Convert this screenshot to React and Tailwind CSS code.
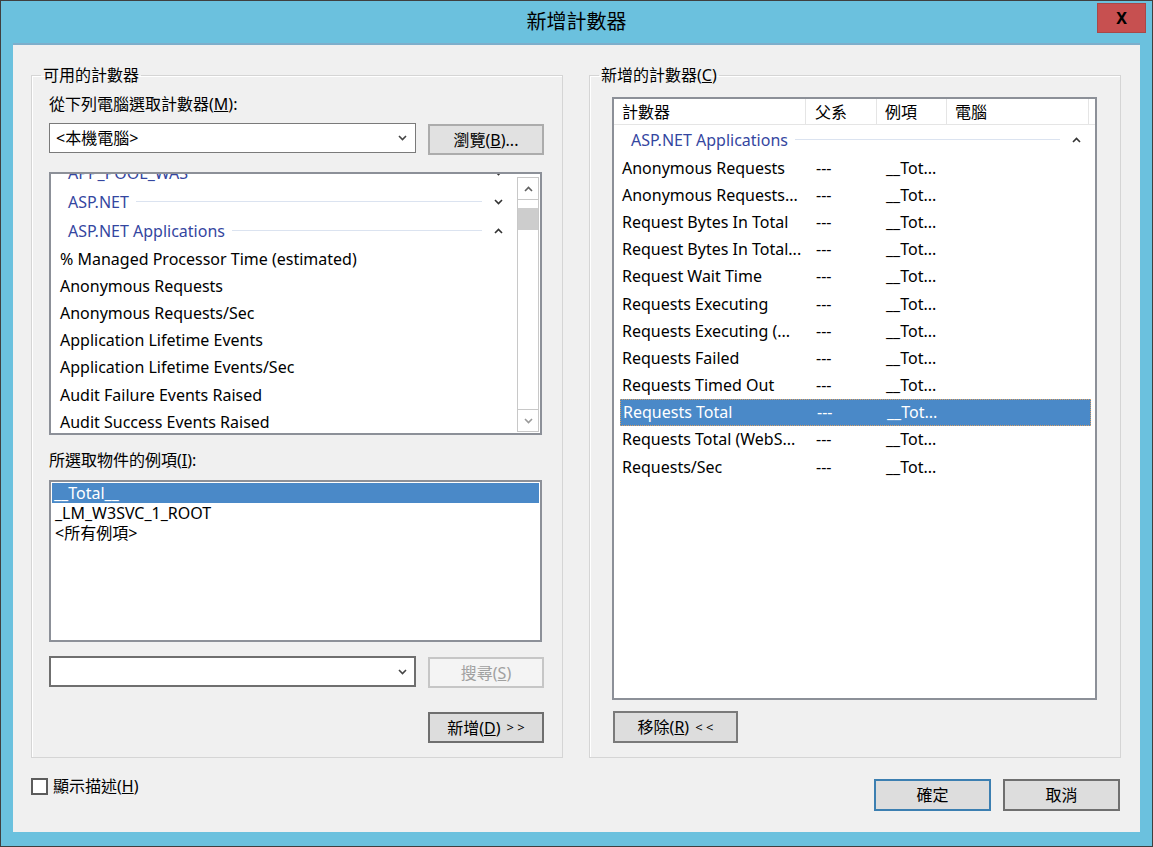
import React from 'react';

const leftItems = [
  '% Managed Processor Time (estimated)',
  'Anonymous Requests',
  'Anonymous Requests/Sec',
  'Application Lifetime Events',
  'Application Lifetime Events/Sec',
  'Audit Failure Events Raised',
  'Audit Success Events Raised',
  'Cache % Machine Memory Limit Used',
];

const addedRows = [
  'Anonymous Requests',
  'Anonymous Requests...',
  'Request Bytes In Total',
  'Request Bytes In Total...',
  'Request Wait Time',
  'Requests Executing',
  'Requests Executing (...',
  'Requests Failed',
  'Requests Timed Out',
  'Requests Total',
  'Requests Total (WebS...',
  'Requests/Sec',
];

function Chevron({ up, className }) {
  return (
    <svg width="9" height="6" viewBox="0 0 9 6" className={className}>
      <polyline
        points={up ? '1,5 4.5,1.5 8,5' : '1,1 4.5,4.5 8,1'}
        fill="none"
        stroke="currentColor"
        strokeWidth="1.6"
      />
    </svg>
  );
}

function GroupHeader({ label, up }) {
  return (
    <div className="flex h-[29px] shrink-0 items-center pl-[17px] pr-[14px] text-[#3446a0]">
      <span className="whitespace-nowrap leading-none">{label}</span>
      <div className="ml-[7px] h-px flex-1 bg-[#dbe3f0]" />
      <Chevron up={up} className="ml-[12px] text-[#333]" />
    </div>
  );
}

function Btn({ className = '', children }) {
  return (
    <button type="button" className={`flex shrink-0 items-center justify-center leading-none ${className}`}>
      {children}
    </button>
  );
}

export default function App() {
  return (
    <div className="h-[847px] w-[1153px] overflow-hidden font-['Noto_Sans','Noto_Sans_CJK_TC',sans-serif] text-[16px] text-black">
      <div className="flex h-full w-full flex-col border border-[#3f3f3f] bg-[#6bc1de]">
        {/* title bar */}
        <div className="grid h-[42px] shrink-0 grid-cols-[1fr_auto_1fr] items-center">
          <div />
          <div className="text-[20px] leading-none">新增計數器</div>
          <div className="flex justify-end self-start pr-[6px] pt-[2px]">
            <button type="button" className="flex h-[30px] w-[49px] items-center justify-center border border-[#a84848] bg-[#c75050] text-[16px] font-bold leading-none">
              X
            </button>
          </div>
        </div>

        {/* client */}
        <div className="mx-[12px] flex h-[789px] shrink-0 flex-col border-t-2 border-[#7eaecb] bg-[#f0f0f0] px-[18px] pt-[19px]">
          <div className="flex gap-[26px]">
            {/* available counters */}
            <fieldset className="h-[694px] w-[532px] border border-[#d5d5d5] shadow-[inset_1px_1px_0_#fff]">
              <legend className="ml-[9px] px-[2px] leading-[22px]">可用的計數器</legend>
              <div className="flex flex-col pl-[17px] pr-[18px] pt-[7px]">
                <div className="leading-[22px]">
                  從下列電腦選取計數器(<u>M</u>):
                </div>
                <div className="mt-[8px] flex items-start justify-between">
                  <div className="flex h-[30px] w-[367px] items-center justify-between border border-[#7a7a7a] bg-white pl-[6px] pr-[8px]">
                    <span className="leading-none">&lt;本機電腦&gt;</span>
                    <Chevron className="text-[#444]" />
                  </div>
                  <Btn className="mt-[1px] h-[31px] w-[116px] border-2 border-[#acacac] bg-[#e1e1e1]">
                    瀏覽(<u>B</u>)...
                  </Btn>
                </div>

                <div className="mt-[17px] flex h-[263px] w-[493px] border-2 border-[#8c9098] bg-white">
                  <div className="flex flex-1 flex-col overflow-hidden">
                    <div className="-mt-[16px] flex flex-col">
                      <GroupHeader label="APP_POOL_WAS" />
                      <GroupHeader label="ASP.NET" />
                      <GroupHeader label="ASP.NET Applications" up />
                      {leftItems.map((item) => (
                        <div key={item} className="flex h-[27.2px] shrink-0 items-center whitespace-nowrap pl-[9px]">
                          {item}
                        </div>
                      ))}
                    </div>
                  </div>
                  <div className="mb-[1px] mr-[1px] mt-[3px] flex w-[22px] flex-col border border-[#c8c8c8] bg-white">
                    <div className="flex h-[22px] items-center justify-center border-b border-[#c8c8c8]">
                      <Chevron up className="text-[#606060]" />
                    </div>
                    <div className="mt-[8px] h-[22px] bg-[#cdcdcd]" />
                    <div className="flex-1" />
                    <div className="flex h-[22px] items-center justify-center border-t border-[#c8c8c8]">
                      <Chevron className="text-[#9a9a9a]" />
                    </div>
                  </div>
                </div>

                <div className="mt-[14px] leading-[22px]">
                  所選取物件的例項(<u>I</u>):
                </div>
                <div className="mt-[9px] flex h-[162px] w-[493px] flex-col border-2 border-[#8c9098] bg-white px-[1px] pt-[1px]">
                  <div className="flex h-[20px] items-center bg-[#4a89c8] pl-[2px] text-white">__Total__</div>
                  <div className="flex h-[20px] items-center pl-[3px]">_LM_W3SVC_1_ROOT</div>
                  <div className="flex h-[20px] items-center pl-[3px]">&lt;所有例項&gt;</div>
                </div>

                <div className="mt-[14px] flex items-start justify-between">
                  <div className="flex h-[31px] w-[367px] items-center justify-end border-2 border-[#6f6f6f] bg-white pr-[7px]">
                    <Chevron className="text-[#444]" />
                  </div>
                  <Btn className="mt-[1px] h-[31px] w-[116px] border-2 border-[#c6c6c6] bg-[#f4f4f4] text-[#a0a0a0]">
                    搜尋(<u>S</u>)
                  </Btn>
                </div>

                <div className="mt-[24px] flex justify-end">
                  <Btn className="h-[31px] w-[116px] gap-[6px] border-2 border-[#6f6f6f] bg-[#dddddd]">
                    <span>
                      新增(<u>D</u>)
                    </span>
                    <span className="text-[13px]">&gt; &gt;</span>
                  </Btn>
                </div>
              </div>
            </fieldset>

            {/* added counters */}
            <fieldset className="h-[694px] w-[532px] border border-[#d5d5d5] shadow-[inset_1px_1px_0_#fff]">
              <legend className="ml-[9px] px-[2px] leading-[22px]">
                新增的計數器(<u>C</u>)
              </legend>
              <div className="flex flex-col pl-[22px] pt-[11px]">
                <div className="flex h-[603px] w-[485px] flex-col border-2 border-[#8c9098] bg-white">
                  <div className="flex h-[26px] shrink-0 border-b border-[#e5e5e5]">
                    <div className="flex w-[192px] items-center border-r border-[#e5e5e5] pl-[8px]">計數器</div>
                    <div className="flex w-[71px] items-center border-r border-[#e5e5e5] pl-[9px]">父系</div>
                    <div className="flex w-[70px] items-center border-r border-[#e5e5e5] pl-[8px]">例項</div>
                    <div className="flex w-[142px] items-center border-r border-[#e5e5e5] pl-[8px]">電腦</div>
                  </div>
                  <GroupHeader label="ASP.NET Applications" up />
                  {addedRows.map((name) => {
                    const selected = name === 'Requests Total';
                    return (
                      <div
                        key={name}
                        className={`ml-[6px] mr-[4px] flex h-[27.2px] shrink-0 items-center whitespace-nowrap ${
                          selected ? 'border border-dotted border-[#d9a064] bg-[#4a89c8] text-white' : ''
                        }`}
                      >
                        <div className="w-[187px] pl-[2px]">{name}</div>
                        <div className="w-[70px] pl-[9px]">---</div>
                        <div className="w-[70px] pl-[9px]">__Tot...</div>
                      </div>
                    );
                  })}
                </div>
                <Btn className="ml-[1px] mt-[11px] h-[32px] w-[125px] gap-[6px] border-2 border-[#7a7a7a] bg-[#dddddd]">
                  <span>
                    移除(<u>R</u>)
                  </span>
                  <span className="text-[13px]">&lt; &lt;</span>
                </Btn>
              </div>
            </fieldset>
          </div>

          {/* bottom row */}
          <div className="mt-[18px] flex items-start justify-between">
            <div className="flex h-[20px] items-center gap-[5px]">
              <div className="h-[17px] w-[17px] border-2 border-[#5c5c5c] bg-white" />
              <span className="leading-none">
                顯示描述(<u>H</u>)
              </span>
            </div>
            <div className="mr-[2px] mt-[3px] flex gap-[12px]">
              <Btn className="h-[32px] w-[117px] border-2 border-[#3c7fb1] bg-[#dddddd]">確定</Btn>
              <Btn className="h-[32px] w-[117px] border-2 border-[#6f6f6f] bg-[#dddddd]">取消</Btn>
            </div>
          </div>
        </div>
      </div>
    </div>
  );
}
